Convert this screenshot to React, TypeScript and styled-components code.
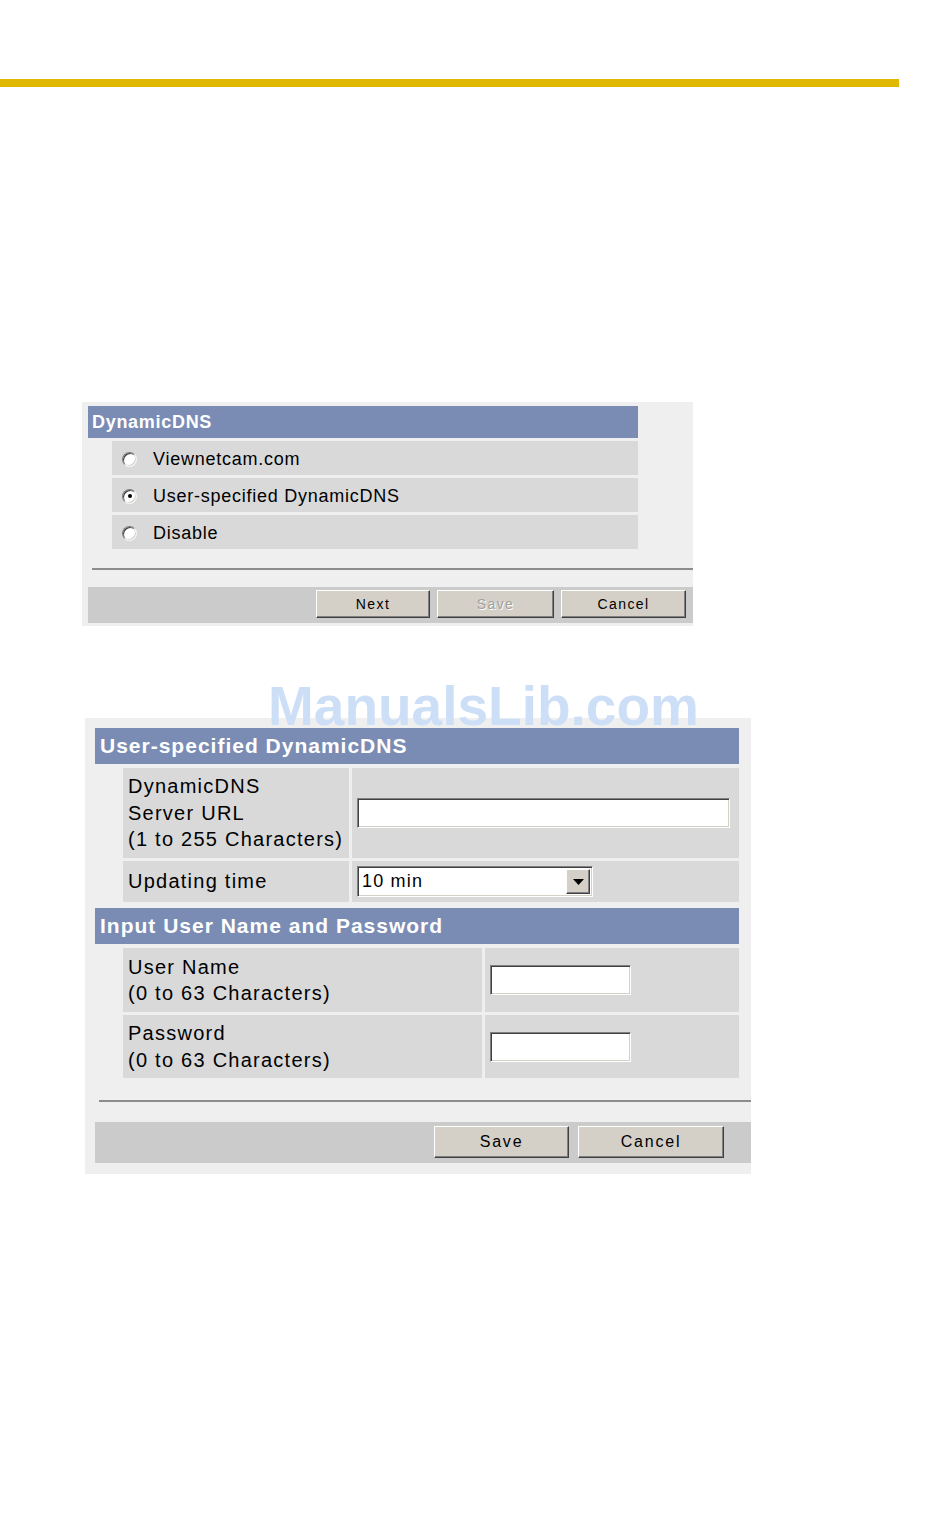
import styled, { createGlobalStyle } from "styled-components"

const GlobalStyle = createGlobalStyle`
  html, body {
    margin: 0;
    padding: 0;
    background: #ffffff;
  }
  body {
    font-family: "Liberation Sans", Arial, sans-serif;
    color: #000000;
  }
`

// page wrapper, watermark is positioned against it
const Page = styled.div`
  position: relative;
  min-height: 1525px;
  padding-top: 79px;
  box-sizing: border-box;
`

const TopRule = styled.div`
  width: 899px;
  height: 8px;
  background: #e0b800;
`

const Panel = styled.div<{ $left: number; $width: number; $top: number; $pt: number; $pb: number }>`
  margin-top: ${(p) => p.$top}px;
  margin-left: ${(p) => p.$left}px;
  width: ${(p) => p.$width}px;
  padding: ${(p) => p.$pt}px 0 ${(p) => p.$pb}px;
  background: #efefef;
  display: flex;
  flex-direction: column;
`

const SectionHeader = styled.div<{ $size: number; $indent: number; $width: number; $height: number; $pad: number; $spacing: number; $gapTop?: number }>`
  margin: ${(p) => p.$gapTop ?? 0}px 0 0 ${(p) => p.$indent}px;
  width: ${(p) => p.$width}px;
  height: ${(p) => p.$height}px;
  box-sizing: border-box;
  padding-left: ${(p) => p.$pad}px;
  background: #7a8cb4;
  color: #ffffff;
  font-weight: 700;
  font-size: ${(p) => p.$size}px;
  letter-spacing: ${(p) => p.$spacing}px;
  display: flex;
  align-items: center;
`

// radio list (first panel)
const OptionList = styled.div`
  margin: 3px 0 0 30px;
  width: 526px;
  display: flex;
  flex-direction: column;
  gap: 3px;
`

const OptionRow = styled.label`
  height: 34px;
  box-sizing: border-box;
  padding: 2px 0 0 10px;
  background: #d9d9d9;
  display: flex;
  align-items: center;
  gap: 16px;
  font-size: 18px;
  letter-spacing: 0.75px;
`

const Radio = styled.span<{ $checked?: boolean }>`
  position: relative;
  width: 13px;
  height: 13px;
  border-radius: 50%;
  border: 1px solid;
  border-color: #7a7a7a #f4f4f4 #f4f4f4 #7a7a7a;
  box-shadow: inset 1px 1px 0 #3c3c3c, inset -1px -1px 0 #d4d0c8;
  background: #ffffff;
  flex: none;

  &::after {
    content: "";
    display: ${(p) => (p.$checked ? "block" : "none")};
    position: absolute;
    left: 4.5px;
    top: 4.5px;
    width: 4px;
    height: 4px;
    border-radius: 50%;
    background: #000000;
  }
`

const Divider = styled.div<{ $left: number; $top: number; $bottom: number }>`
  margin: ${(p) => p.$top}px 0 ${(p) => p.$bottom}px ${(p) => p.$left}px;
  height: 0;
  border-top: 2px solid #8c8c8c;
`

const ButtonBar = styled.div<{ $left: number; $height: number; $gap: number; $padRight: number; $padTop: number }>`
  margin-left: ${(p) => p.$left}px;
  height: ${(p) => p.$height}px;
  box-sizing: border-box;
  padding: ${(p) => p.$padTop}px ${(p) => p.$padRight}px 0 0;
  background: #cbcbcb;
  display: flex;
  justify-content: flex-end;
  align-items: flex-start;
  gap: ${(p) => p.$gap}px;
`

const ClassicButton = styled.button<{ $width: number; $height: number; $size: number; $spacing: number }>`
  width: ${(p) => p.$width}px;
  height: ${(p) => p.$height}px;
  padding: 0;
  background: #d4d0c8;
  border: 1px solid;
  border-color: #ffffff #404040 #404040 #ffffff;
  box-shadow: inset -1px -1px 0 #808080;
  font-family: "Liberation Sans", Arial, sans-serif;
  font-size: ${(p) => p.$size}px;
  letter-spacing: ${(p) => p.$spacing}px;
  color: #000000;

  &:disabled {
    color: #a0a0a0;
    text-shadow: 1px 1px 0 #ffffff;
  }
`

// label / value grid (second panel)
const FieldTable = styled.div<{ $cols: string }>`
  margin: 4px 0 0 38px;
  width: 616px;
  display: grid;
  grid-template-columns: ${(p) => p.$cols};
  gap: 3px;
`

const LabelCell = styled.div<{ $height: number }>`
  height: ${(p) => p.$height}px;
  background: #d9d9d9;
  display: flex;
  align-items: center;
  padding-left: 5px;
  font-size: 20px;
  line-height: 26.5px;
  letter-spacing: 1.25px;
`

const ValueCell = styled.div`
  background: #d9d9d9;
  display: flex;
  align-items: center;
  padding-left: 5px;
`

const TextBox = styled.input<{ $width: number }>`
  width: ${(p) => p.$width}px;
  height: 30px;
  box-sizing: border-box;
  padding: 0 4px;
  border: 1px solid;
  border-color: #808080 #ffffff #ffffff #808080;
  box-shadow: inset 1px 1px 0 #404040, inset -1px -1px 0 #d4d0c8;
  background: #ffffff;
  font-family: "Liberation Sans", Arial, sans-serif;
  font-size: 18px;
  outline: none;
`

const SelectBox = styled.div`
  width: 236px;
  height: 31px;
  box-sizing: border-box;
  border: 1px solid;
  border-color: #808080 #ffffff #ffffff #808080;
  box-shadow: inset 1px 1px 0 #404040, inset -1px -1px 0 #d4d0c8;
  background: #ffffff;
  display: flex;
  align-items: center;
  padding: 2px 2px 2px 4px;
`

const SelectValue = styled.span`
  flex: 1;
  font-size: 18px;
  letter-spacing: 1.2px;
`

const SelectArrow = styled.span`
  width: 24px;
  height: 100%;
  box-sizing: border-box;
  background: #d4d0c8;
  border: 1px solid;
  border-color: #ffffff #404040 #404040 #ffffff;
  box-shadow: inset -1px -1px 0 #808080;
  display: flex;
  align-items: center;
  justify-content: center;
`

const Watermark = styled.div`
  position: absolute;
  left: 268px;
  top: 679px;
  font-weight: 700;
  font-size: 55px;
  line-height: 1;
  color: #cddff7;
  pointer-events: none;
`

export default function App() {
  return (
    <>
      <GlobalStyle />
      <Page>
        <TopRule />

        <Panel $top={315} $left={82} $width={611} $pt={4} $pb={3}>
          <SectionHeader $indent={6} $width={550} $height={32} $pad={4} $size={18} $spacing={0.7}>
            DynamicDNS
          </SectionHeader>
          <OptionList>
            <OptionRow>
              <Radio />
              Viewnetcam.com
            </OptionRow>
            <OptionRow>
              <Radio $checked />
              User-specified DynamicDNS
            </OptionRow>
            <OptionRow>
              <Radio />
              Disable
            </OptionRow>
          </OptionList>
          <Divider $left={10} $top={19} $bottom={17} />
          <ButtonBar $left={6} $height={36} $gap={7} $padRight={7} $padTop={3}>
            <ClassicButton $width={114} $height={28} $size={14} $spacing={1.4}>Next</ClassicButton>
            <ClassicButton $width={117} $height={28} $size={14} $spacing={1.4} disabled>Save</ClassicButton>
            <ClassicButton $width={125} $height={28} $size={14} $spacing={1.4}>Cancel</ClassicButton>
          </ButtonBar>
        </Panel>

        <Panel $top={92} $left={85} $width={666} $pt={10} $pb={11}>
          <SectionHeader $indent={10} $width={644} $height={36} $pad={5} $size={21} $spacing={1}>
            User-specified DynamicDNS
          </SectionHeader>
          <FieldTable $cols="226px 387px">
            <LabelCell $height={90}>
              DynamicDNS
              <br />
              Server URL
              <br />
              (1 to 255 Characters)
            </LabelCell>
            <ValueCell>
              <TextBox $width={373} />
            </ValueCell>
            <LabelCell $height={41}>Updating time</LabelCell>
            <ValueCell>
              <SelectBox>
                <SelectValue>10 min</SelectValue>
                <SelectArrow>
                  <svg width="11" height="6" viewBox="0 0 11 6">
                    <path d="M0 0h11L5.5 6z" fill="#000" />
                  </svg>
                </SelectArrow>
              </SelectBox>
            </ValueCell>
          </FieldTable>

          <SectionHeader $indent={10} $width={644} $height={36} $pad={5} $size={21} $spacing={1} $gapTop={6}>
            Input User Name and Password
          </SectionHeader>
          <FieldTable $cols="359px 254px">
            <LabelCell $height={64}>
              User Name
              <br />
              (0 to 63 Characters)
            </LabelCell>
            <ValueCell>
              <TextBox $width={141} />
            </ValueCell>
            <LabelCell $height={63}>
              Password
              <br />
              (0 to 63 Characters)
            </LabelCell>
            <ValueCell>
              <TextBox $width={141} type="password" />
            </ValueCell>
          </FieldTable>

          <Divider $left={14} $top={22} $bottom={20} />
          <ButtonBar $left={10} $height={41} $gap={9} $padRight={27} $padTop={4}>
            <ClassicButton $width={135} $height={32} $size={16} $spacing={1.8}>Save</ClassicButton>
            <ClassicButton $width={146} $height={32} $size={16} $spacing={1.8}>Cancel</ClassicButton>
          </ButtonBar>
        </Panel>

        <Watermark>ManualsLib.com</Watermark>
      </Page>
    </>
  )
}
